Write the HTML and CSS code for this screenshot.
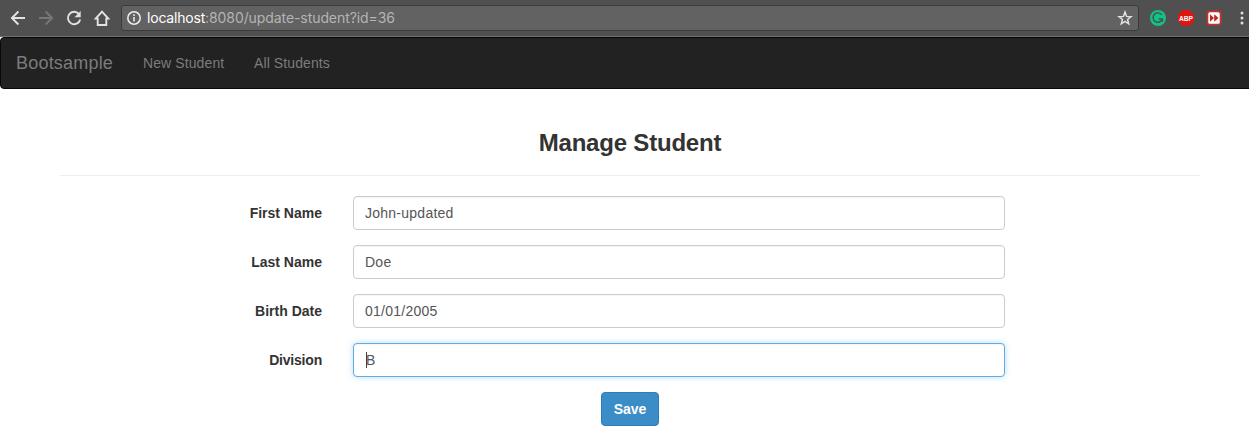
FILE: index.html
```html
<!DOCTYPE html>
<html lang="en">
<head>
<meta charset="utf-8">
<title>Manage Student</title>
<link rel="stylesheet" href="styles.css">
</head>
<body>
<header class="toolbar">
  <div class="nav-icons">
    <svg class="icon" viewBox="0 0 16 16"><path d="M15 8H2M8.400 1.500L1.900 8l6.500 6.500"/></svg>
    <svg class="icon icon-off" viewBox="0 0 16 16"><path d="M1 8h13M7.600 1.500L14.100 8l-6.500 6.500"/></svg>
    <svg class="icon" viewBox="0 0 16 16"><path d="M13.300 4.500A6.200 6.200 0 1 0 14.200 9.500"/><path class="solid" d="M14.700 1v6.200H8.500z"/></svg>
    <svg class="icon" viewBox="0 0 16 16"><path d="M8 1.700L1.700 8.600h2V15h8.600V8.600h2z"/></svg>
  </div>
  <div class="address">
    <svg class="info" viewBox="0 0 14 14"><circle cx="7" cy="7" r="6.200"/><path d="M7 6v4.500M7 3.300v1.600"/></svg>
    <span class="url"><span class="host">localhost</span>:8080/update-student?id=36</span>
    <svg class="star" viewBox="0 0 16 16"><path d="M8 2l1.600 4.400 4.400.3-3.400 2.800 1.100 4.300L8 11.400l-3.700 2.400 1.100-4.300L2 6.700l4.400-.3z"/></svg>
  </div>
  <div class="extensions">
    <svg class="ext" viewBox="0 0 16 16"><circle cx="8" cy="8" r="8" fill="#15bf88"/><path d="M11.700 4.900A4.700 4.700 0 1 0 12.300 9H8.800M12.400 8.800v3" fill="none" stroke="#405650" stroke-width="1.500"/></svg>
    <svg class="ext" viewBox="0 0 16 16"><path d="M4.700 0h6.600L16 4.700v6.600L11.300 16H4.700L0 11.300V4.700z" fill="#dc1712"/><text class="abp" x="1" y="11" textLength="14" lengthAdjust="spacingAndGlyphs">ABP</text></svg>
    <svg class="ext" viewBox="0 0 16 16"><rect x=".500" y=".500" width="15" height="15" rx="3" fill="#c9302c"/><rect x="2.300" y="2.300" width="11.400" height="11.400" rx="1.500" fill="#fff"/><path d="M4 4.300L8 8l-4 3.700zM8.200 4.300l4.300 3.700-4.300 3.700z" fill="#b92724"/></svg>
    <svg class="dots" viewBox="0 0 4 14"><circle cx="2" cy="2" r="1.500"/><circle cx="2" cy="7" r="1.500"/><circle cx="2" cy="12" r="1.500"/></svg>
  </div>
</header>
<div class="page">
  <nav class="navbar">
    <a class="brand">Bootsample</a>
    <a class="link link-new">New Student</a>
    <a class="link">All Students</a>
  </nav>
  <main class="container">
    <h3 class="title">Manage Student</h3>
    <form class="form">
      <label class="label" for="first">First Name</label><input class="control" id="first" value="John-updated">
      <label class="label" for="last">Last Name</label><input class="control" id="last" value="Doe">
      <label class="label" for="birth">Birth Date</label><input class="control" id="birth" value="01/01/2005">
      <label class="label label-division" for="division">Division</label>
      <div class="control control-focus"><span class="caret"></span>B</div>
    </form>
    <button class="save" type="button">Save</button>
  </main>
</div>
</body>
</html>
```
FILE: styles.css
```css
* { box-sizing: border-box; }
body { margin: 0; height: 448px; overflow: hidden; background: #fff; color: #333; font: 14px/20px "Liberation Sans", Arial, sans-serif; }
.toolbar { display: flex; height: 37px; padding: 5px 3px 0 10px; background: #505050; border-bottom: 1px solid #707070; }
.nav-icons { display: flex; gap: 12px; width: 111px; padding-top: 5px; }
.icon { width: 16px; height: 16px; fill: none; stroke: #e2e2e2; stroke-width: 1.9; }
.icon-off { stroke: #777; }
.icon .solid { fill: #e2e2e2; stroke: none; }
.address { display: flex; align-items: center; width: 1018px; height: 26px; padding: 0 5px; background: #626262; border: 1px solid #3b3b3b; border-radius: 3px; }
.info { width: 14px; height: 14px; fill: none; stroke: #f0f0f0; stroke-width: 1.5; }
.url { margin-left: 6px; color: #b4b4b4; font: 14px/20px Inter, sans-serif; letter-spacing: -.08px; white-space: nowrap; }
.host { color: #fff; letter-spacing: -.2px; }
.star { width: 16px; height: 16px; margin-left: auto; fill: none; stroke: #e2e2e2; stroke-width: 1.5; }
.extensions { display: flex; gap: 12px; margin-left: 11px; padding-top: 5px; }
.ext { width: 16px; height: 16px; flex: none; overflow: visible; }
.abp { fill: #fff; font: bold 7.5px "Liberation Sans", sans-serif; }
.dots { width: 4px; height: 14px; margin: 1px 0 0 6px; fill: #e0e0e0; flex: none; }
.page { width: 1260px; }
.navbar { display: flex; align-items: center; height: 52px; padding-left: 15px; background: #222; border: 1px solid #080808; border-radius: 4px; color: #7c7c7c; }
.brand { width: 127px; font-size: 18px; letter-spacing: .2px; }
.link { letter-spacing: .1px; }
.link-new { width: 111px; }
.container { width: 1140px; margin: 0 auto; text-align: center; }
.title { margin: 0 0 20px; padding: 41px 0 19px; border-bottom: 1px solid #eee; font-size: 24px; line-height: 26px; font-weight: bold; letter-spacing: -.2px; }
.form { display: grid; grid-template-columns: 263px 652px; gap: 15px 30px; }
.label { padding: 7px 1px 0 0; text-align: right; font-weight: bold; }
.label-division { letter-spacing: -.2px; }
.control { display: flex; align-items: center; width: 652px; height: 34px; padding: 6px 11px; background: #fff; border: 1px solid #ccc; border-radius: 4px; box-shadow: inset 0 1px 1px rgba(0,0,0,.04); color: #555; font: inherit; letter-spacing: .25px; }
.control-focus { position: relative; padding-left: 12px; border-color: #5eade3; box-shadow: inset 0 1px 1px rgba(0,0,0,.04), 0 0 6px rgba(102,175,233,.45); }
.caret { position: absolute; left: 12px; top: 8px; width: 1px; height: 16px; background: #444; }
.save { width: 58px; height: 34px; margin-top: 15px; padding: 0; background: #3b8dc8; border: 1px solid #2e7dba; border-radius: 4px; color: #fff; font: bold 14px/20px "Liberation Sans", Arial, sans-serif; letter-spacing: -.1px; }
```
